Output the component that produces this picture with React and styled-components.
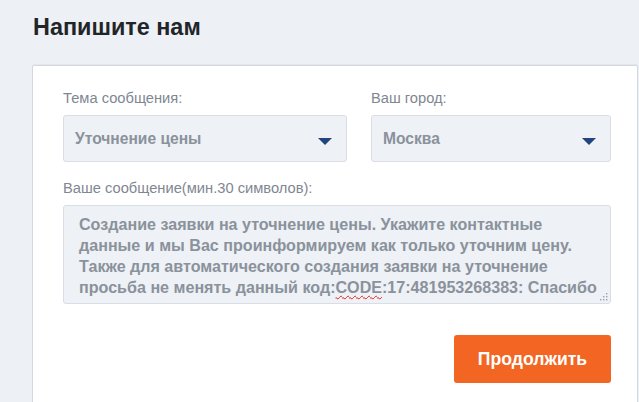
import React from "react";
import styled, { createGlobalStyle } from "styled-components";

const GlobalStyle = createGlobalStyle`
  html, body {
    margin: 0;
    padding: 0;
    background: #edf0f4;
    font-family: "Liberation Sans", Arial, sans-serif;
  }
`;

const Page = styled.div`
  padding: 14px 0 0 32px;
  height: 402px;
  box-sizing: border-box;
  overflow: hidden;
`;

const Title = styled.h1`
  margin: 0 0 25px 1px;
  font-size: 23.4px;
  line-height: 26px;
  font-weight: bold;
  color: #222528;
`;

const Card = styled.div`
  width: 606px;
  height: 360px;
  box-sizing: border-box;
  background: #fff;
  border: 1px solid #d3d8df;
  border-radius: 2px;
  box-shadow: 0 -1px 0 #e3e7ec;
  padding: 24px 26px 0 30px;
`;

const Row = styled.div`
  display: grid;
  grid-template-columns: 284px 240px;
  column-gap: 24px;
  margin-bottom: 18px;
`;

const Field = styled.div`
  display: flex;
  flex-direction: column;
`;

const Label = styled.label`
  font-size: 14.7px;
  line-height: 16px;
  color: #7f8792;
  margin-bottom: 9px;
`;

const Select = styled.div`
  position: relative;
  height: 47px;
  box-sizing: border-box;
  background: #eef1f5;
  border: 1px solid #d9dee4;
  border-radius: 3px;
  display: flex;
  align-items: center;
  padding: 0 40px 0 11px;
  font-size: 15.6px;
  font-weight: bold;
  color: #8a929c;
`;

const Arrow = styled.span`
  position: absolute;
  right: 14px;
  top: 22px;
  width: 0;
  height: 0;
  border-left: 7px solid transparent;
  border-right: 7px solid transparent;
  border-top: 7px solid #21467f;
`;

const Message = styled.div`
  position: relative;
  width: 548px;
  height: 99px;
  box-sizing: border-box;
  background: #eef1f5;
  border: 1px solid #d9dee4;
  border-radius: 3px;
  padding: 8px 6px 0 15px;
  font-size: 16.1px;
  line-height: 21px;
  font-weight: bold;
  color: #8a929c;
  overflow: hidden;
`;

const Grip = styled.svg`
  position: absolute;
  right: 2px;
  bottom: 2px;
`;

const Misspelt = styled.span`
  text-decoration: underline wavy #e2231a;
  text-decoration-thickness: 1px;
  text-underline-offset: 2px;
`;

const Actions = styled.div`
  display: flex;
  justify-content: flex-end;
  width: 548px;
  margin-top: 31px;
`;

const Button = styled.button`
  width: 157px;
  height: 48px;
  border: none;
  border-radius: 3px;
  background: #f26522;
  color: #fff;
  font-family: inherit;
  font-size: 17.6px;
  font-weight: bold;
  cursor: pointer;
`;

function Dropdown({ value }) {
  return (
    <Select>
      {value}
      <Arrow />
    </Select>
  );
}

export default function App() {
  return (
    <Page>
      <GlobalStyle />
      <Title>Напишите нам</Title>
      <Card>
        <Row>
          <Field>
            <Label>Тема сообщения:</Label>
            <Dropdown value="Уточнение цены" />
          </Field>
          <Field>
            <Label>Ваш город:</Label>
            <Dropdown value="Москва" />
          </Field>
        </Row>
        <Field>
          <Label>Ваше сообщение(мин.30 символов):</Label>
          <Message>
            Создание заявки на уточнение цены. Укажите контактные
            <br />
            данные и мы Вас проинформируем как только уточним цену.
            <br />
            Также для автоматического создания заявки на уточнение
            <br />
            просьба не менять данный код:<Misspelt>CODE</Misspelt>
            :17:481953268383: Спасибо
            <Grip width="8" height="8" viewBox="0 0 8 8">
              <g fill="#9aa1aa">
                <rect x="6" y="0" width="1.4" height="1.4" />
                <rect x="3" y="3" width="1.4" height="1.4" />
                <rect x="6" y="3" width="1.4" height="1.4" />
                <rect x="0" y="6" width="1.4" height="1.4" />
                <rect x="3" y="6" width="1.4" height="1.4" />
                <rect x="6" y="6" width="1.4" height="1.4" />
              </g>
            </Grip>
          </Message>
        </Field>
        <Actions>
          <Button>Продолжить</Button>
        </Actions>
      </Card>
    </Page>
  );
}
